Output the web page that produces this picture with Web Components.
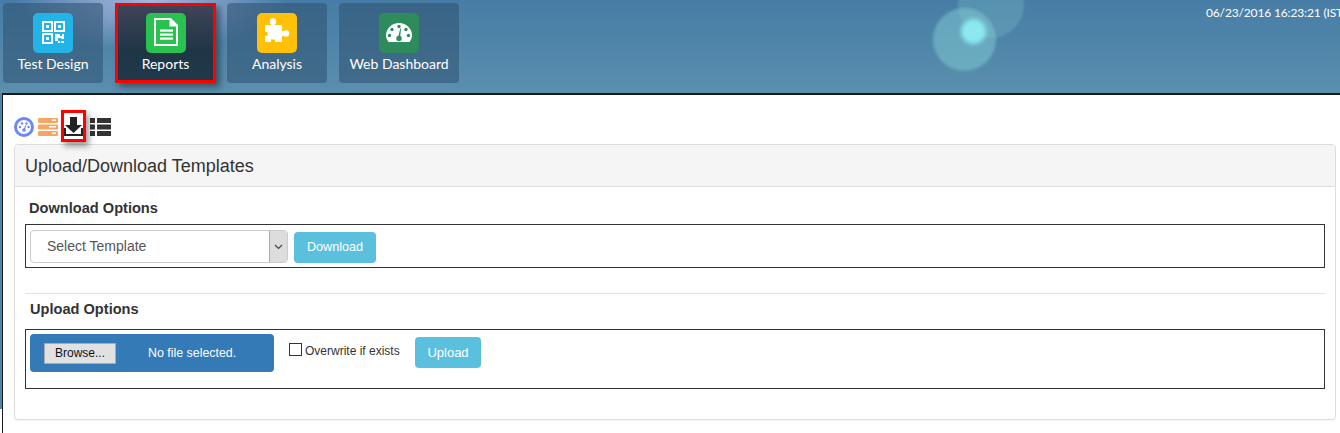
<!DOCTYPE html>
<html>
<head>
<meta charset="utf-8">
<title>Templates</title>
<style>
    html, body { margin: 0; padding: 0; }
    body {
        height: 433px;
        overflow: hidden;
        background: linear-gradient(180deg, #4f86a8 0, #4f86a8 409px, #fff 409px);
        font-family: "Liberation Sans", Arial, sans-serif;
    }
</style>
</head>
<body>
<app-header>
    <nav-tile label="Test Design" color="#22b4e6" icon="qr"></nav-tile>
    <nav-tile label="Reports" color="#29c150" icon="doc" active></nav-tile>
    <nav-tile label="Analysis" color="#ffc107" icon="puzzle"></nav-tile>
    <nav-tile label="Web Dashboard" color="#2e8b5c" icon="gauge" wide></nav-tile>
</app-header>
<app-content>
    <tool-bar></tool-bar>
    <template-panel heading="Upload/Download Templates">
        <option-box title="Download Options" kind="download"></option-box>
        <option-box title="Upload Options" kind="upload"></option-box>
    </template-panel>
</app-content>

<script>
const ICONS = {
    qr: `<svg viewBox="0 0 40 40" width="40" height="40" fill="none" stroke="#fff">
        <g stroke-width="2"><rect x="10" y="9" width="9" height="9"/><rect x="22" y="9" width="9" height="9"/><rect x="10" y="21" width="9" height="9"/></g>
        <g fill="#fff" stroke="none"><rect x="13" y="12" width="3" height="3"/><rect x="25" y="12" width="3" height="3"/><rect x="13" y="24" width="3" height="3"/>
        <path d="M22 21h5v2h2v-2h2v5h-3v-1h-3v3h-3z"/><rect x="25" y="28" width="2" height="2"/><rect x="28" y="28" width="3" height="2"/></g></svg>`,
    doc: `<svg viewBox="0 0 40 40" width="40" height="40">
        <path d="M9 6h15.500L31 12.500V32H9z" fill="none" stroke="#fff" stroke-width="2"/>
        <path d="M23.500 5.500v8h8z" fill="#fff"/>
        <g fill="#fff"><rect x="14" y="16.500" width="13" height="2.200"/><rect x="14" y="20.500" width="13" height="2.200"/><rect x="14" y="24.500" width="13" height="2.200"/></g></svg>`,
    puzzle: `<svg viewBox="0 0 40 40" width="40" height="40"><g fill="#fff">
        <path d="M8 12h6v-3h4v3h7v6h2v5h-2v6H18v-2.500h-4V29H8v-6h2.500v-4H8z"/>
        <circle cx="16" cy="8.500" r="3.200"/><circle cx="29" cy="20.500" r="3.200"/></g></svg>`,
    gauge: `<svg viewBox="0 0 40 40" width="40" height="40"><path fill="#fff" d="M9.500 29C7.800 26.800 7 24.500 7 22.500 7 15.500 12.800 10 20 10s13 5.500 13 12.500c0 2-.8 4.300-2.500 6.500z"/>
        <g fill="#2e8b5c"><circle cx="20" cy="13.500" r="1.700"/><circle cx="13" cy="16.500" r="1.700"/><circle cx="27" cy="16.500" r="1.700"/><circle cx="10.500" cy="22.500" r="1.700"/><circle cx="29.500" cy="22.500" r="1.700"/><circle cx="20" cy="25.500" r="2.700"/><path d="M19 25l2.200-9.500.8.200-1 9.800z"/></g></svg>`
};

class AppHeader extends HTMLElement {
    constructor() {
        super();
        this.attachShadow({ mode: 'open' });
        this.shadowRoot.innerHTML = `
            <style>
                :host {
                    display: block;
                    position: relative;
                    height: 93px;
                    box-sizing: border-box;
                    overflow: hidden;
                    background:
                        radial-gradient(ellipse 135px 50px at 150px 0, rgba(190,195,235,.85), rgba(190,195,235,0) 100%),
                        linear-gradient(180deg, #477ca6 0%, #5a8fae 100%);
                }
                .tiles {
                    display: flex;
                    gap: 12px;
                    padding: 3px 0 0 3px;
                }
                .stamp {
                    position: absolute;
                    top: 5px;
                    left: 1206px;
                    white-space: nowrap;
                    color: #fff;
                    font: 12px Lato, sans-serif;
                    letter-spacing: -0.15px;
                }
                .glow {
                    position: absolute;
                    border-radius: 50%;
                }
                .g1 { left: 958px; top: -28px; width: 66px; height: 66px; background: rgba(118,185,196,.35); filter: blur(1px); }
                .g2 { left: 933px; top: 8px; width: 63px; height: 63px; background: rgba(130,205,212,.5); filter: blur(1.500px); }
                .g3 { left: 961px; top: 19px; width: 25px; height: 25px; background: #8ce8ee; filter: blur(2px); }
            </style>
            <span class="glow g1"></span><span class="glow g2"></span><span class="glow g3"></span>
            <div class="tiles"><slot></slot></div>
            <span class="stamp">06/23/2016 16:23:21 (IST)</span>
        `;
    }
}

class NavTile extends HTMLElement {
    constructor() {
        super();
        this.attachShadow({ mode: 'open' });
    }
    connectedCallback() {
        const label = this.getAttribute('label');
        const color = this.getAttribute('color');
        const icon = ICONS[this.getAttribute('icon')];
        this.shadowRoot.innerHTML = `
            <style>
                :host {
                    display: block;
                    box-sizing: border-box;
                    width: 100px;
                    height: 80px;
                    border-radius: 4px;
                    background: rgba(50,85,115,.6);
                    color: #fff;
                    text-align: center;
                    font: 14px Lato, sans-serif;
                }
                :host([wide]) { width: 120px; }
                :host([active]) {
                    width: 101px;
                    margin-right: -1px;
                    border: 3px solid #f00;
                    border-radius: 0;
                    background: linear-gradient(180deg, #3f4358 0%, #1f3646 60%, #21384a 100%);
                    box-shadow: 4px 4px 6px rgba(30,40,50,.55);
                }
                .icon {
                    display: block;
                    width: 40px;
                    height: 40px;
                    margin: 10px auto 0;
                    border-radius: 5px;
                    background: var(--tile);
                }
                :host([active]) .icon { margin-top: 7px; }
                .label { display: block; margin-top: 2px; line-height: 17px; }
                svg { display: block; }
            </style>
            <span class="icon" style="--tile:${color}">${icon}</span>
            <span class="label">${label}</span>
        `;
    }
}

class AppContent extends HTMLElement {
    constructor() {
        super();
        this.attachShadow({ mode: 'open' });
        this.shadowRoot.innerHTML = `
            <style>
                :host {
                    display: block;
                    box-sizing: border-box;
                    height: 340px;
                    margin-left: 2px;
                    border-top: 2px solid #1a1a1a;
                    border-left: 1px solid #1a1a1a;
                    padding: 17px 4px 0 11px;
                    background: #fff;
                }
            </style>
            <slot></slot>
        `;
    }
}

class ToolBar extends HTMLElement {
    constructor() {
        super();
        this.attachShadow({ mode: 'open' });
        this.shadowRoot.innerHTML = `
            <style>
                :host {
                    display: flex;
                    align-items: center;
                    height: 30px;
                    margin-bottom: 2px;
                }
                svg { display: block; }
                .pick {
                    position: relative;
                    box-sizing: border-box;
                    width: 25px;
                    height: 32px;
                    margin: -3px 4px 0 3px;
                    border: 3px solid #f00;
                    box-shadow: 3px 4px 6px rgba(0,0,0,.4);
                }
                .pick svg { position: absolute; left: 0; top: 3px; }
            </style>
            <svg width="20" height="20" viewBox="0 0 20 20">
                <circle cx="10" cy="10" r="8.500" fill="#fff" stroke="#6f86f5" stroke-width="3"/>
                <g fill="#6f86f5"><circle cx="6" cy="10" r="1.200"/><circle cx="8" cy="6.500" r="1.200"/><circle cx="12.500" cy="6.500" r="1.200"/><circle cx="14.500" cy="10" r="1.200"/><circle cx="10" cy="13" r="1.800"/><path d="M9.500 13l2-5 .8.300-1.600 5z"/></g>
            </svg>
            <svg width="20" height="18" viewBox="0 0 20 18" style="margin-left:4px">
                <g fill="#f7a562"><rect x="0" y="0" width="20" height="5" rx="1"/><rect x="0" y="6.500" width="20" height="5" rx="1"/><rect x="0" y="13" width="20" height="5" rx="1"/></g>
                <g fill="#fff"><rect x="11" y="8" width="7" height="1.500"/><rect x="14" y="1.500" width="4" height="1.500"/><rect x="14" y="14.500" width="4" height="1.500"/></g>
            </svg>
            <span class="pick">
                <svg width="19" height="22" viewBox="0 0 19 22">
                    <path fill="#222" d="M6 1h7v8h5l-8.500 8L1 9h5z"/>
                    <path fill="#222" d="M0 12h2v6h15v-6h2v8H0z"/>
                </svg>
            </span>
            <svg width="21" height="18" viewBox="0 0 21 18">
                <g fill="#333"><rect x="0" y="0" width="5" height="5"/><rect x="7" y="0" width="14" height="5"/><rect x="0" y="6.500" width="5" height="5"/><rect x="7" y="6.500" width="14" height="5"/><rect x="0" y="13" width="5" height="5"/><rect x="7" y="13" width="14" height="5"/></g>
            </svg>
        `;
    }
}

class TemplatePanel extends HTMLElement {
    constructor() {
        super();
        this.attachShadow({ mode: 'open' });
    }
    connectedCallback() {
        this.shadowRoot.innerHTML = `
            <style>
                :host {
                    display: block;
                    box-sizing: border-box;
                    height: 276px;
                    border: 1px solid #ddd;
                    border-radius: 4px;
                    box-shadow: 0 1px 1px rgba(0,0,0,.05);
                    background: #fff;
                }
                .head {
                    box-sizing: border-box;
                    height: 42px;
                    padding: 11px 10px 0;
                    background: #f5f5f5;
                    border-bottom: 1px solid #ddd;
                    border-radius: 3px 3px 0 0;
                    color: #333;
                    font-size: 18px;
                    line-height: 20px;
                }
                .body { padding: 0 10px; }
            </style>
            <div class="head">${this.getAttribute('heading')}</div>
            <div class="body"><slot></slot></div>
        `;
    }
}

class OptionBox extends HTMLElement {
    constructor() {
        super();
        this.attachShadow({ mode: 'open' });
    }
    connectedCallback() {
        const upload = this.getAttribute('kind') === 'upload';
        const row = upload ? `
            <div class="file">
                <span class="browse">Browse...</span>
                <span class="none">No file selected.</span>
            </div>
            <label class="check"><span class="tick"></span>Overwrite if exists</label>
            <span class="btn up">Upload</span>
        ` : `
            <div class="select">
                <span class="sel-text">Select Template</span>
                <span class="arrow"><svg width="9" height="6" viewBox="0 0 9 6"><path d="M1 1l3.500 3.500L8 1" fill="none" stroke="#444" stroke-width="1.200"/></svg></span>
            </div>
            <span class="btn">Download</span>
        `;
        this.shadowRoot.innerHTML = `
            <style>
                :host {
                    display: block;
                    color: #333;
                }
                :host([kind="upload"]) {
                    margin-top: 25px;
                    border-top: 1px solid #e2e2e2;
                }
                h4 {
                    margin: 0;
                    padding: 12px 0 0 4px;
                    height: 18px;
                    font-size: 14.600px;
                    line-height: 18px;
                    font-weight: bold;
                }
                :host([kind="upload"]) h4 { padding: 6px 0 0 5px; }
                .row {
                    display: flex;
                    align-items: flex-start;
                    box-sizing: border-box;
                    height: 44px;
                    margin-top: 7px;
                    padding: 5px 4px;
                    border: 1px solid #333;
                    font-size: 14px;
                }
                :host([kind="upload"]) .row { height: 60px; margin-top: 11px; }
                .select {
                    display: flex;
                    box-sizing: border-box;
                    width: 258px;
                    height: 33px;
                    border: 1px solid #ccc;
                    border-radius: 4px;
                    overflow: hidden;
                }
                .sel-text {
                    flex: 1;
                    padding-left: 16px;
                    line-height: 31px;
                    color: #555;
                }
                .arrow {
                    display: flex;
                    align-items: center;
                    justify-content: center;
                    width: 17px;
                    background: #ddd;
                    border-left: 1px solid #aaa;
                }
                .btn {
                    box-sizing: border-box;
                    width: 82px;
                    height: 31px;
                    margin: 2px 0 0 6px;
                    background: #5bc0de;
                    border-radius: 4px;
                    color: #fff;
                    text-align: center;
                    font-size: 12.600px;
                    line-height: 31px;
                }
                .btn.up { width: 66px; margin: 2px 0 0 0; font-size: 13px; }
                .file {
                    display: flex;
                    align-items: center;
                    box-sizing: border-box;
                    width: 244px;
                    height: 38px;
                    margin-top: -1px;
                    padding-left: 14px;
                    background: #337ab7;
                    border-radius: 4px;
                    font-size: 12px;
                }
                .browse {
                    box-sizing: border-box;
                    width: 72px;
                    height: 21px;
                    border: 1px solid #aaa;
                    background: #e1e1e1;
                    color: #111;
                    text-align: center;
                    line-height: 19px;
                }
                .none { margin-left: 32px; color: #fff; font-size: 12.400px; }
                .check {
                    display: flex;
                    align-items: flex-start;
                    width: 126px;
                    margin: 8px 0 0 15px;
                    font-size: 12px;
                    line-height: 16px;
                    white-space: nowrap;
                }
                .tick {
                    box-sizing: border-box;
                    width: 13px;
                    height: 13px;
                    margin-right: 3px;
                    background: #fff;
                    border: 1px solid #333;
                }
            </style>
            <h4>${this.getAttribute('title')}</h4>
            <div class="row">${row}</div>
        `;
    }
}

customElements.define('app-header', AppHeader);
customElements.define('nav-tile', NavTile);
customElements.define('app-content', AppContent);
customElements.define('tool-bar', ToolBar);
customElements.define('template-panel', TemplatePanel);
customElements.define('option-box', OptionBox);
</script>
</body>
</html>
